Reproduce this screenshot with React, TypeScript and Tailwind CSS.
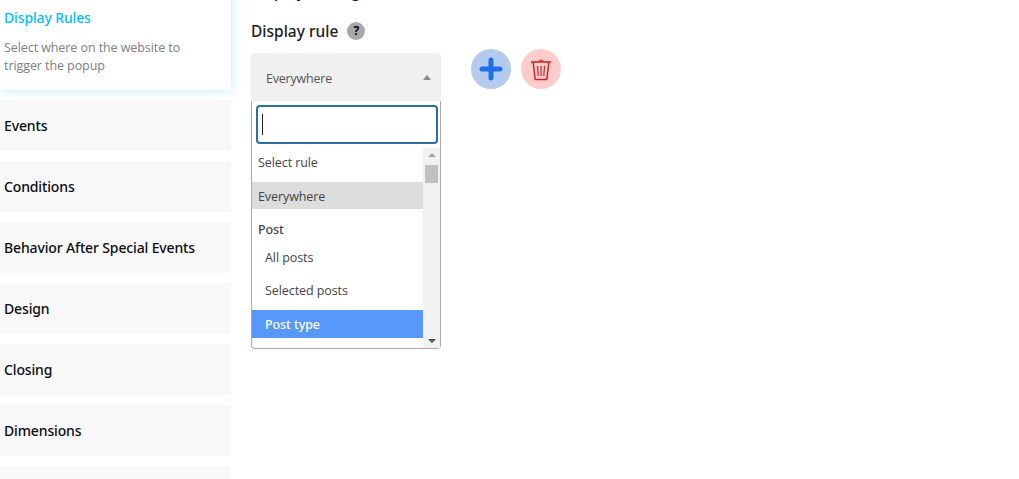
import { useState } from "react";

const sections = [
  "Events",
  "Conditions",
  "Behavior After Special Events",
  "Design",
  "Closing",
  "Dimensions",
  "",
];

function TrashIcon() {
  return (
    <svg width="22" height="25" viewBox="0 0 22 25" fill="none" stroke="#c9252d">
      <path d="M1 5h20" strokeWidth="1.6" />
      <path d="M9 5c0-2.6 4-2.6 4 0" strokeWidth="1.1" />
      <path d="M3.2 5.5l2 17h11.6l2-17" strokeWidth="1.5" />
      <path d="M7.5 9l.7 10M11 9v10M14.5 9l-.7 10" strokeWidth="1.2" />
    </svg>
  );
}

function Sidebar() {
  return (
    <div className="w-[231px] shrink-0 flex flex-col gap-[10px] -mt-[10px]">
      <div className="h-[100px] shrink-0 bg-white pl-1 pt-[18px] shadow-[0_0_12px_rgba(0,191,255,0.28)]">
        <h3 className="font-['Noto_Sans',sans-serif] text-[14px] leading-[19px] font-medium tracking-[-0.14px] text-[#00bfff]">
          Display Rules
        </h3>
        <p className="mt-[12px] text-[12.5px] leading-[18px] tracking-[-0.08px] text-[#808080]">
          Select where on the website to
          <br />
          trigger the popup
        </p>
      </div>
      {sections.map((name, i) => (
        <div key={i} className="h-[51px] shrink-0 bg-[#f8f8f8] pl-1 flex items-center">
          <span className="font-['Noto_Sans',sans-serif] text-[14px] font-medium tracking-[-0.14px] text-[#0c0c12]">
            {name}
          </span>
        </div>
      ))}
    </div>
  );
}

function RuleOption({ label, className }: { label: string; className: string }) {
  return <div className={`flex items-center text-[12.5px] tracking-[-0.08px] ${className}`}>{label}</div>;
}

function RuleSelect() {
  const [query, setQuery] = useState("");
  return (
    <div className="w-[190px]">
      <div className="h-[48px] bg-[#f0f0f0] rounded-t-[4px] flex items-center pl-[15px] pr-[10px] justify-between">
        <span className="text-[12.5px] tracking-[-0.2px] text-[#555] pt-[4px]">Everywhere</span>
        <span className="w-0 h-0 border-x-[4px] border-x-transparent border-b-[5px] border-b-[#888]" />
      </div>
      <div className="h-[248px] bg-white border border-t-0 border-[#aaa] rounded-b-[4px] flex flex-col">
        <div className="relative pt-[4px] pl-[4px] pr-[2px] pb-[4px]">
          <input
            value={query}
            onChange={(e) => setQuery(e.target.value)}
            className="w-full h-[39px] block rounded-[4px] border-2 border-[#2f6f9f] px-1 outline-none bg-white"
          />
          <span className="absolute left-[10px] top-[13px] w-px h-[21px] bg-[#222]" />
        </div>
        <div className="flex-1 flex min-h-0">
          <div className="flex-1 flex flex-col text-[#444] overflow-hidden">
            <RuleOption label="Select rule" className="h-[34px] shrink-0 pl-[6px] pb-[3px]" />
            <RuleOption label="Everywhere" className="h-[27px] shrink-0 pl-[6px] pt-[3px] bg-[#dddddd]" />
            <RuleOption label="Post" className="h-[30px] shrink-0 pl-[6px] pt-[13px] font-['Noto_Sans',sans-serif] font-medium" />
            <RuleOption label="All posts" className="h-[34px] shrink-0 pl-[13px] pt-[4px]" />
            <RuleOption label="Selected posts" className="h-[37px] shrink-0 pl-[13px] pb-[1px]" />
            <RuleOption label="Post type" className="h-[28px] shrink-0 pl-[13px] pt-[2px] bg-[#5897fb] text-white font-['Noto_Sans',sans-serif] font-medium" />
          </div>
          <div className="w-[17px] shrink-0 bg-[#f1f1f1] flex flex-col items-center justify-between pt-[5px] pb-[5px] relative">
            <span className="w-0 h-0 border-x-[4px] border-x-transparent border-b-[4px] border-b-[#a3a3a3]" />
            <span className="absolute top-[17px] left-[2px] w-[13px] h-[18px] bg-[#c1c1c1]" />
            <span className="w-0 h-0 border-x-[4px] border-x-transparent border-t-[4px] border-t-[#505050]" />
          </div>
        </div>
      </div>
    </div>
  );
}

export default function App() {
  return (
    <div className="h-[479px] w-[1019px] overflow-hidden bg-white flex gap-5 font-['Open_Sans','Noto_Sans',sans-serif]">
      <Sidebar />
      <div className="flex-1 -mt-[19px] font-['Noto_Sans',sans-serif]">
        <div className="h-[24px] text-[15.5px] leading-[21px] font-medium text-[#111]">Display settings</div>
        <div className="flex items-center mt-[15px] gap-[9px] h-[22px]">
          <span className="text-[15.5px] font-medium text-[#1c1c1c] pt-[2px]">Display rule</span>
          <span className="w-[18px] h-[18px] rounded-full bg-[#a8a8a8] flex items-center justify-center text-[12px] font-bold text-black">
            ?
          </span>
        </div>
        <div className="flex mt-[7px] items-start font-['Open_Sans',sans-serif]">
          <div className="mt-[4px]">
            <RuleSelect />
          </div>
          <div className="flex gap-[10px] ml-[30px]">
            <button className="w-10 h-10 rounded-full bg-[#b5caef] flex items-center justify-center">
              <svg width="24" height="24" viewBox="0 0 24 24" stroke="#1f6fec" strokeWidth="5" strokeLinecap="round">
                <path d="M12 3v18M3 12h18" />
              </svg>
            </button>
            <button className="w-10 h-10 rounded-full bg-[#ffcccc] flex items-center justify-center">
              <TrashIcon />
            </button>
          </div>
        </div>
      </div>
    </div>
  );
}
